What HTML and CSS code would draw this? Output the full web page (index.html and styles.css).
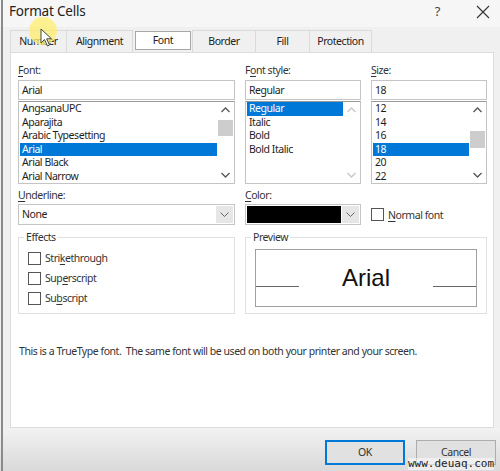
FILE: index.html
```html
<!DOCTYPE html>
<html>
<head>
<meta charset="utf-8">
<link rel="stylesheet" href="styles.css">
</head>
<body>
<div class="edge"></div>
<div class="window">
  <div class="titlebar">
    <span class="title">Format Cells</span>
    <span class="help">?</span>
    <svg class="close" width="14" height="14" viewBox="0 0 14 14"><path d="M1 1L13 13M13 1L1 13" stroke="#333" stroke-width="1.1" fill="none"/></svg>
  </div>
  <div class="tabs">
    <div class="tab t-number">Number</div>
    <div class="tab t-align">Alignment</div>
    <div class="tab t-font active">Font</div>
    <div class="tab t-border">Border</div>
    <div class="tab t-fill">Fill</div>
    <div class="tab t-prot">Protection</div>
  </div>
  <div class="panel">
    <div class="grid">
      <div class="lbl"><u>F</u>ont:</div>
      <div class="lbl">F<u>o</u>nt style:</div>
      <div class="lbl"><u>S</u>ize:</div>

      <div class="textbox">Arial</div>
      <div class="textbox">Regular</div>
      <div class="textbox">18</div>

      <div class="listbox">
        <ul class="items">
          <li>AngsanaUPC</li>
          <li>Aparajita</li>
          <li>Arabic Typesetting</li>
          <li class="sel">Arial</li>
          <li>Arial Black</li>
          <li>Arial Narrow</li>
        </ul>
        <div class="scroll">
          <svg class="arr" width="17" height="16" viewBox="0 0 17 16"><polyline points="4.5,10 8.5,6 12.5,10" fill="none" stroke="#555" stroke-width="1.3"/></svg>
          <div class="track"><div class="thumb thumb-font"></div></div>
          <svg class="arr" width="17" height="16" viewBox="0 0 17 16"><polyline points="4.5,6 8.5,10 12.5,6" fill="none" stroke="#555" stroke-width="1.3"/></svg>
        </div>
      </div>
      <div class="listbox">
        <ul class="items">
          <li class="sel">Regular</li>
          <li>Italic</li>
          <li>Bold</li>
          <li>Bold Italic</li>
        </ul>
        <div class="scroll">
          <svg class="arr" width="17" height="16" viewBox="0 0 17 16"><polyline points="4.5,10 8.5,6 12.5,10" fill="none" stroke="#c8c8c8" stroke-width="1.3"/></svg>
          <div class="track"></div>
          <svg class="arr" width="17" height="16" viewBox="0 0 17 16"><polyline points="4.5,6 8.5,10 12.5,6" fill="none" stroke="#c8c8c8" stroke-width="1.3"/></svg>
        </div>
      </div>
      <div class="listbox">
        <ul class="items">
          <li>12</li>
          <li>14</li>
          <li>16</li>
          <li class="sel">18</li>
          <li>20</li>
          <li>22</li>
        </ul>
        <div class="scroll">
          <svg class="arr" width="17" height="16" viewBox="0 0 17 16"><polyline points="4.5,10 8.5,6 12.5,10" fill="none" stroke="#555" stroke-width="1.3"/></svg>
          <div class="track"><div class="thumb thumb-size"></div></div>
          <svg class="arr" width="17" height="16" viewBox="0 0 17 16"><polyline points="4.5,6 8.5,10 12.5,6" fill="none" stroke="#555" stroke-width="1.3"/></svg>
        </div>
      </div>

      <div class="lbl lbl2"><u>U</u>nderline:</div>
      <div class="lbl lbl2"><u>C</u>olor:</div>
      <div class="lbl lbl2"></div>

      <div class="combo">
        <span class="combo-text">None</span>
        <span class="drop"><svg width="9" height="6" viewBox="0 0 9 6"><polyline points="0.5,0.5 4.5,4.5 8.5,0.5" fill="none" stroke="#666" stroke-width="1"/></svg></span>
      </div>
      <div class="combo">
        <span class="swatch"></span>
        <span class="drop"><svg width="9" height="6" viewBox="0 0 9 6"><polyline points="0.5,0.5 4.5,4.5 8.5,0.5" fill="none" stroke="#666" stroke-width="1"/></svg></span>
      </div>
      <div class="check-line">
        <span class="cb"></span><span><u>N</u>ormal font</span>
      </div>

      <fieldset class="group effects">
        <legend>Effects</legend>
        <div class="check-row"><span class="cb"></span><span>Stri<u>k</u>ethrough</span></div>
        <div class="check-row"><span class="cb"></span><span>Sup<u>e</u>rscript</span></div>
        <div class="check-row"><span class="cb"></span><span>Su<u>b</u>script</span></div>
      </fieldset>
      <fieldset class="group preview">
        <legend>Preview</legend>
        <div class="preview-box">
          <span class="pline"></span>
          <span class="ptext">Arial</span>
          <span class="pline"></span>
        </div>
      </fieldset>
    </div>
    <p class="note">This is a TrueType font.&nbsp; The same font will be used on both your printer and your screen.</p>
  </div>
  <div class="footer">
    <div class="btn ok">OK</div>
    <div class="btn">Cancel</div>
  </div>
</div>
<div class="cursor-glow"></div>
<svg class="cursor" width="14" height="20" viewBox="0 0 14 20"><path d="M1 1L1 15L4.5 11.5L7.5 18L9.5 17L6.7 10.8L11.5 10.8Z" fill="#fff" stroke="#444" stroke-width="1"/></svg>
<div class="watermark">www.deuaq.com</div>
</body>
</html>
```
FILE: styles.css
```css
* { box-sizing: border-box; }
html, body { margin: 0; padding: 0; }
body {
  width: 500px;
  height: 471px;
  overflow: hidden;
  background: #f0f0f0;
  font-family: "Noto Sans", "Open Sans", sans-serif;
  font-size: 10.5px;
  letter-spacing: -0.45px;
  color: #1e1e1e;
  position: relative;
}
.edge {
  position: absolute;
  left: 1px; top: 0;
  width: 2px; height: 471px;
  background: #8a8a8a;
}
.window {
  display: flex;
  flex-direction: column;
  height: 471px;
}
.titlebar {
  height: 27px;
  display: flex;
  align-items: flex-start;
  padding: 2px 0 0 9px;
  background: #f6f6f6;
}
.title {
  font-size: 13.5px;
  letter-spacing: -0.2px;
  line-height: 18px;
  color: #222;
  flex: 1;
}
.help {
  font-size: 13px;
  line-height: 18px;
  color: #444;
  margin-right: 36px;
}
.close { margin: 3px 10px 0 0; }

.tabs {
  height: 25px;
  display: flex;
  align-items: flex-end;
  padding-left: 10px;
}
.tab {
  height: 22px;
  line-height: 21px;
  text-align: center;
  color: #222;
  border: 1px solid #dadada;
  border-bottom: none;
  border-left: none;
  background: #f0f0f0;
}
.t-number { width: 57px; border-left: 1px solid #dadada; }
.t-align { width: 66px; }
.t-font {
  width: 56px;
  height: 19px;
  line-height: 17px;
  margin: 0 1px 2px 2px;
  border: 1px solid #a8a8a8;
  background: #fff;
}
.t-border { width: 64px; border-left: 1px solid #dadada; }
.t-fill { width: 54px; }
.t-prot { width: 62px; }

.panel {
  height: 376px;
  margin: 0 6px 0 10px;
  background: #fff;
  border: 1px solid #dcdcdc;
  padding: 9px 0 0 7px;
}
.grid {
  display: grid;
  grid-template-columns: 217px 116px 116px;
  column-gap: 10px;
}
.lbl {
  height: 16px;
  line-height: 16px;
  color: #333;
  margin-bottom: 2px;
}
.lbl2 { margin-top: 3px; margin-bottom: 1px; }
u { text-decoration-thickness: 1px; text-underline-offset: 2px; }
.textbox {
  height: 20px;
  border: 1px solid #c4c4c4;
  line-height: 18px;
  padding-left: 3px;
}
.listbox {
  height: 83px;
  margin-top: 1px;
  border: 1px solid #c4c4c4;
  border-top-color: #999;
  display: flex;
  padding: 0 0 0 1px;
}
.items {
  list-style: none;
  margin: 0;
  padding: 0;
  flex: 1;
}
.items li {
  height: 13.6px;
  line-height: 13.6px;
  padding-left: 2px;
  white-space: nowrap;
}
.items li.sel {
  background: #0078d7;
  color: #fff;
}
.scroll {
  width: 17px;
  display: flex;
  flex-direction: column;
  background: #fff;
}
.arr { display: block; flex: none; }
.track { flex: 1; position: relative; }
.thumb {
  position: absolute;
  left: 1px; right: 1px;
  background: #cdcdcd;
}
.thumb-font { top: 2px; height: 16px; }
.thumb-size { top: 13px; height: 17px; }

.combo {
  height: 21px;
  border: 1px solid #c4c4c4;
  display: flex;
  align-items: stretch;
  padding: 1px;
}
.combo-text {
  flex: 1;
  line-height: 17px;
  padding-left: 2px;
}
.swatch {
  flex: 1;
  background: #000;
  margin-right: 1px;
}
.drop {
  width: 17px;
  background: #e6e6e6;
  display: flex;
  align-items: center;
  justify-content: center;
}
.check-line {
  display: flex;
  align-items: center;
  gap: 4px;
  height: 21px;
  color: #333;
}
.cb {
  width: 13px;
  height: 13px;
  border: 1px solid #555;
  background: #fff;
  flex: none;
}
.group {
  margin: 4px 0 0 0;
  padding: 0 9px 0 9px;
  border: 1px solid #e0e0e0;
  min-width: 0;
  height: 85px;
}
.group legend {
  padding: 0 2px;
  margin-left: -4px;
  line-height: 16px;
  color: #333;
}
.effects { padding-top: 3px; }
.check-row {
  height: 20px;
  display: flex;
  align-items: center;
  gap: 4px;
  color: #333;
}
.preview { grid-column: 2 / 4; padding-top: 4px; }
.preview-box {
  height: 58px;
  border: 1px solid #a0a0a0;
  display: flex;
  align-items: flex-start;
}
.pline {
  width: 43px;
  height: 1px;
  background: #666;
  margin-top: 36px;
}
.ptext {
  flex: 1;
  text-align: center;
  font-family: "Liberation Sans", Arial, sans-serif;
  font-size: 24px;
  letter-spacing: 0;
  line-height: 24px;
  margin-top: 16px;
  color: #111;
}
.note {
  margin: 29px 0 0 1px;
  line-height: 16px;
  color: #333;
}

.footer {
  flex: 1;
  display: flex;
  justify-content: flex-end;
  align-items: flex-start;
  gap: 11px;
  padding: 12px 4px 0 0;
  background: linear-gradient(#f2f2f2, #d9d9d9);
}
.btn {
  width: 80px;
  height: 25px;
  border: 1px solid #adadad;
  background: #e1e1e1;
  text-align: center;
  line-height: 22px;
  color: #333;
}
.btn.ok { border: 2px solid #0078d7; line-height: 20px; }

.cursor-glow {
  position: absolute;
  left: 29px; top: 17px;
  width: 28px; height: 28px;
  border-radius: 50%;
  background: rgba(255, 238, 110, 0.75);
}
.cursor {
  position: absolute;
  left: 40px; top: 28px;
}
.watermark {
  position: absolute;
  left: 408px; top: 458px;
  font-family: "DejaVu Sans Mono", monospace;
  font-size: 11px;
  letter-spacing: 0;
  line-height: 12px;
  color: #222;
  background: rgba(255,255,255,0.5);
}
```
